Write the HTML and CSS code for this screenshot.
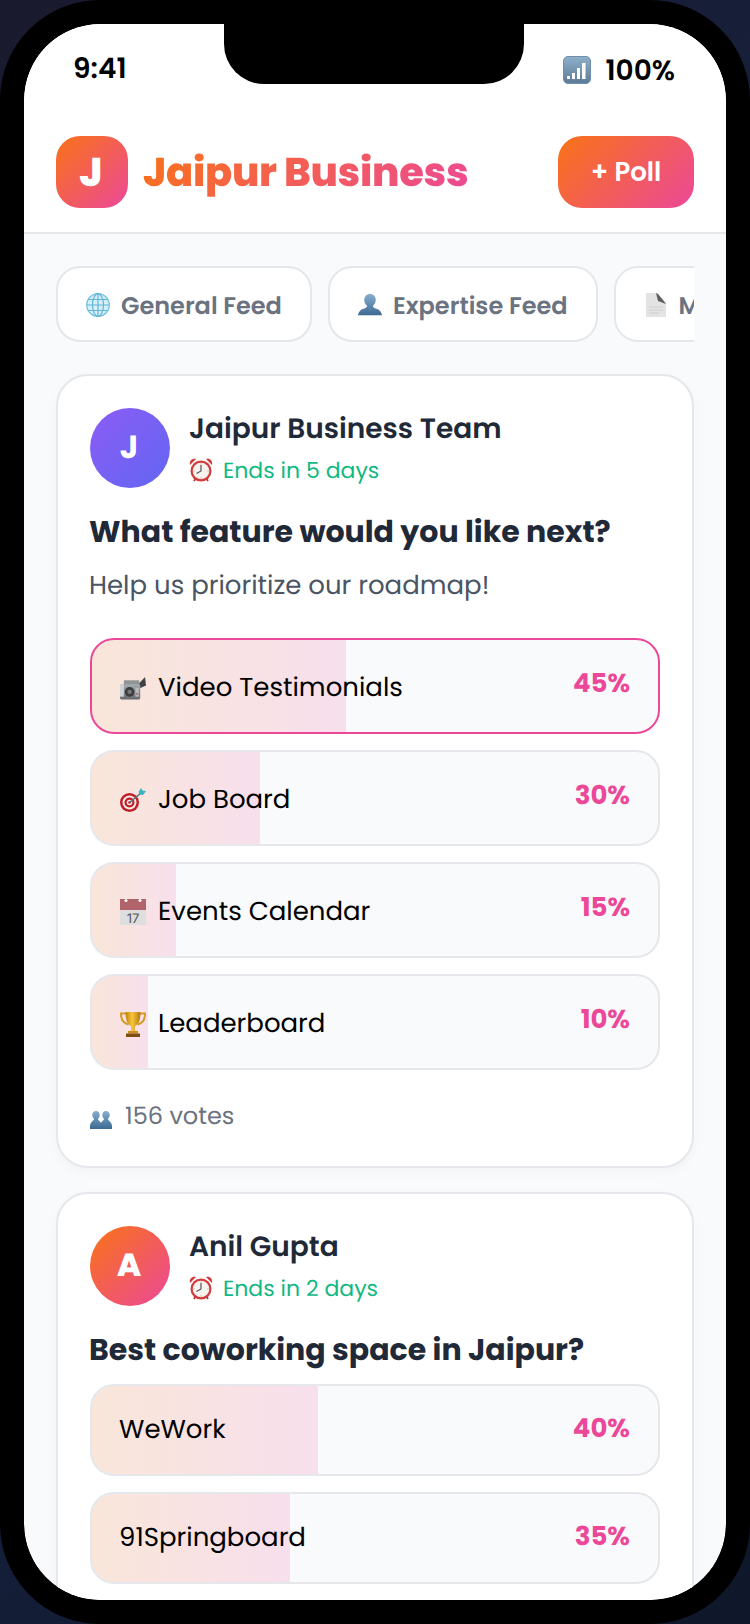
FILE: index.html
```html
<!DOCTYPE html>
<html lang="en">
<head>
<meta charset="utf-8">
<title>Jaipur Business</title>
<link rel="stylesheet" href="styles.css">
</head>
<body>
<svg class="defs" width="0" height="0" aria-hidden="true">
  <defs>
    <linearGradient id="sig" x1="0" y1="0" x2="0" y2="1"><stop offset="0" stop-color="#8fb0cb"/><stop offset="1" stop-color="#5b7a97"/></linearGradient>
    <linearGradient id="blue" x1="0" y1="0" x2="0" y2="1"><stop offset="0" stop-color="#86aed0"/><stop offset="1" stop-color="#3d6a92"/></linearGradient>
    <linearGradient id="gold" x1="0" y1="0" x2="1" y2="0"><stop offset="0" stop-color="#c4820c"/><stop offset=".45" stop-color="#f7c63e"/><stop offset="1" stop-color="#b5760a"/></linearGradient>
    <linearGradient id="cam" x1="0" y1="0" x2="0" y2="1"><stop offset="0" stop-color="#a7adb0"/><stop offset="1" stop-color="#63686b"/></linearGradient>
    <symbol id="clock" viewBox="0 0 24 24">
      <path d="M1 7C0 3 3 0 7 1zM23 7c1-4-2-7-6-6z" fill="#d43c3c"/>
      <path d="M5 23l2-3M19 23l-2-3" stroke="#a33" stroke-width="1.800"/>
      <circle cx="12" cy="13" r="10.500" fill="#d43c3c"/>
      <circle cx="12" cy="13" r="8.300" fill="#f7f3ef"/>
      <path d="M12 7v6l-4.500 2.500" fill="none" stroke="#555" stroke-width="1.200"/>
      <path d="M12 5.500v1M12 19.500v1M4.500 13h1M18.500 13h1" stroke="#999" stroke-width="1"/>
    </symbol>
  </defs>
</svg>
<main class="phone">
  <div class="screen">
    <div class="notch"></div>
    <div class="status">
      <span class="time">9:41</span>
      <span class="status-right">
        <svg class="sig-icon" viewBox="0 0 28 28"><rect x=".5" y=".5" width="27" height="27" rx="4.500" fill="url(#sig)" stroke="#6f8fab"/><g fill="#fff"><rect x="4" y="20" width="3" height="3"/><rect x="9" y="17" width="3" height="6"/><rect x="14" y="12" width="3" height="11"/><rect x="19" y="7" width="3.500" height="16"/></g></svg>
        <span>100%</span>
      </span>
    </div>
    <header class="header">
      <div class="brand">
        <div class="logo">J</div>
        <h1 class="brand-name">Jaipur Business</h1>
      </div>
      <button class="add-poll">+ Poll</button>
    </header>
    <div class="content">
      <nav class="tabs">
        <a class="tab">
          <svg class="tab-icon" viewBox="0 0 24 24"><circle cx="12" cy="12" r="11.300" fill="#d6eef7" stroke="#74c3e0" stroke-width="1.300"/><g fill="none" stroke="#62b6d8" stroke-width="1.200"><ellipse cx="12" cy="12" rx="5.500" ry="11.300"/><path d="M12 .7v22.600M.7 12h22.600M2.500 6.500h19M2.500 17.500h19"/></g></svg>
          General Feed
        </a>
        <a class="tab">
          <svg class="tab-icon tab-icon-wide" viewBox="0 0 26 24"><path d="M13 0c4 0 6.200 2.900 6.200 6.600 0 2.800-1.300 5-3 6.300 0 1.400.7 2.100 2.200 2.600 3.400 1.100 6.600 2.300 7.600 7.500H0c1-5.200 4.200-6.400 7.600-7.500 1.500-.5 2.200-1.200 2.200-2.600-1.700-1.300-3-3.500-3-6.300C6.800 2.900 9 0 13 0z" fill="url(#blue)"/></svg>
          Expertise Feed
        </a>
        <a class="tab">
          <svg class="tab-icon" viewBox="0 0 24 24"><path d="M2 0h11l9 10v14H2z" fill="#e3e3e3"/><path d="M12 0l2 8 8 3-3-4-5-6z" fill="#5e5e5e"/><path d="M5 14h14M5 17h14M5 20h10" stroke="#cfcfcf" stroke-width="1"/></svg>
          My Feed
        </a>
      </nav>

      <article class="card">
        <div class="card-head">
          <div class="avatar avatar-violet">J</div>
          <div class="meta">
            <div class="author">Jaipur Business Team</div>
            <div class="ends">
              <svg class="clock"><use href="#clock"/></svg>
              <span>Ends in 5 days</span>
            </div>
          </div>
        </div>
        <h2 class="question">What feature would you like next?</h2>
        <p class="desc">Help us prioritize our roadmap!</p>
        <div class="options">
          <div class="option option-active">
            <div class="fill" style="width:44.9%"></div>
            <div class="label">
              <svg class="opt-icon" viewBox="0 0 27 24"><path d="M19 8l7-7.500 1 9-7 3z" fill="#3f4244"/><rect x="4" y="4" width="16" height="5" fill="#8f9496"/><rect x="0" y="8" width="21" height="16" rx="1.500" fill="url(#cam)"/><rect x="0" y="8" width="4" height="13" fill="#cfd3d5"/><circle cx="10" cy="16" r="5" fill="#3a3c3e"/><circle cx="10" cy="16" r="2.300" fill="#75797c"/><rect x="16" y="12" width="3.500" height="9" fill="#b7bbbd"/><circle cx="17.700" cy="18" r=".9" fill="#b33"/></svg>
              <span>Video Testimonials</span>
            </div>
            <span class="pct">45%</span>
          </div>
          <div class="option">
            <div class="fill" style="width:29.7%"></div>
            <div class="label">
              <svg class="opt-icon" viewBox="0 0 26 24"><circle cx="9.500" cy="14.500" r="9.500" fill="#c11d28"/><circle cx="9.500" cy="14.500" r="7" fill="#f6ebe8"/><circle cx="9.500" cy="14.500" r="5" fill="#c11d28"/><circle cx="9.500" cy="14.500" r="2.800" fill="#f6ebe8"/><circle cx="9.500" cy="14.500" r="1.300" fill="#c11d28"/><path d="M9.500 14.500L21 5" stroke="#5d6f75" stroke-width="1.500"/><path d="M18.500 4L21 0l1.500 2.500L26 3l-3 4-3-.5z" fill="#38b4c6"/></svg>
              <span>Job Board</span>
            </div>
            <span class="pct">30%</span>
          </div>
          <div class="option">
            <div class="fill" style="width:14.85%"></div>
            <div class="label">
              <svg class="opt-icon" viewBox="0 0 26 26"><rect width="26" height="11" fill="#b0636a"/><rect y="11" width="26" height="15" fill="#dedede"/><circle cx="6" cy="1.500" r="1.500" fill="#fff"/><circle cx="20" cy="1.500" r="1.500" fill="#fff"/><text x="13" y="23.500" text-anchor="middle" class="cal-num">17</text></svg>
              <span>Events Calendar</span>
            </div>
            <span class="pct">15%</span>
          </div>
          <div class="option">
            <div class="fill" style="width:9.9%"></div>
            <div class="label">
              <svg class="opt-icon" viewBox="0 0 26 26"><path d="M6 2.500H1c0 6 2.500 10 7.500 11M20 2.500h5c0 6-2.500 10-7.500 11" fill="none" stroke="#d59a22" stroke-width="2"/><path d="M5.500 1h15c0 8.500-2 12.500-5.500 14v5h-4v-5C7.500 13.500 5.500 9.500 5.500 1z" fill="url(#gold)"/><rect x="8" y="20" width="10" height="2.500" fill="#c98e1c"/><rect x="6" y="22.500" width="14" height="3.500" fill="#7d4e10"/></svg>
              <span>Leaderboard</span>
            </div>
            <span class="pct">10%</span>
          </div>
        </div>
        <div class="votes">
          <svg class="votes-icon" viewBox="0 0 22 18"><path d="M6 0c2.300 0 3.700 1.800 3.700 4.100 0 1.700-.8 3.100-1.800 4 0 1.700 3.300 2 4.100 6.400V18H0v-3.500C.8 10.100 4.100 9.800 4.100 8.100c-1-.9-1.800-2.300-1.800-4C2.300 1.800 3.700 0 6 0z" fill="url(#blue)"/><path d="M16 0c2.300 0 3.700 1.800 3.700 4.100 0 1.700-.8 3.100-1.800 4 0 1.700 3.300 2 4.100 6.400V18H10v-3.500c.8-4.400 4.100-4.700 4.100-6.400-1-.9-1.800-2.300-1.800-4C12.300 1.800 13.700 0 16 0z" fill="url(#blue)"/></svg>
          <span>156 votes</span>
        </div>
      </article>

      <article class="card">
        <div class="card-head">
          <div class="avatar avatar-orange">A</div>
          <div class="meta">
            <div class="author">Anil Gupta</div>
            <div class="ends">
              <svg class="clock"><use href="#clock"/></svg>
              <span>Ends in 2 days</span>
            </div>
          </div>
        </div>
        <h2 class="question question-tight">Best coworking space in Jaipur?</h2>
        <div class="options">
          <div class="option option-plain">
            <div class="fill" style="width:40%"></div>
            <div class="label"><span>WeWork</span></div>
            <span class="pct">40%</span>
          </div>
          <div class="option option-plain">
            <div class="fill" style="width:35%"></div>
            <div class="label"><span>91Springboard</span></div>
            <span class="pct">35%</span>
          </div>
        </div>
      </article>
    </div>
  </div>
</main>
</body>
</html>
```

FILE: styles.css
```css
* { box-sizing: border-box; }
html, body { margin: 0; padding: 0; }
body {
  width: 750px;
  height: 1624px;
  overflow: hidden;
  background: linear-gradient(135deg, #1a1a2e, #16213e 50%, #0f172a);
  font-family: "Poppins", "Inter", "Liberation Sans", sans-serif;
  text-rendering: geometricPrecision;
}
.defs { display: block; height: 0; }
.phone {
  width: 750px;
  height: 1624px;
  border: 24px solid #000;
  border-radius: 100px;
  background: #000;
  overflow: hidden;
}
.screen {
  position: relative;
  height: 100%;
  display: flex;
  flex-direction: column;
  background: #f9fafb;
  border-radius: 76px;
  overflow: hidden;
}
.notch {
  position: absolute;
  top: 0;
  left: 200px;
  width: 300px;
  height: 60px;
  background: #000;
  border-radius: 0 0 40px 40px;
}
.status {
  display: flex;
  justify-content: space-between;
  align-items: center;
  height: 88px;
  padding: 0 51px 0 49px;
  background: #fff;
  color: #000;
  font-size: 28px;
  font-weight: 600;
}
.time { margin-top: 2px; }
.status-right { display: flex; align-items: center; gap: 14px; margin-top: 6px; }
.sig-icon { width: 28px; height: 28px; margin-top: -2px; }
.header {
  display: flex;
  justify-content: space-between;
  align-items: center;
  height: 122px;
  padding: 24px 32px 24px;
  background: #fff;
  border-bottom: 2px solid #e5e7eb;
}
.brand { display: flex; align-items: center; gap: 15px; }
.logo {
  width: 72px;
  height: 72px;
  display: flex;
  align-items: center;
  justify-content: center;
  padding-right: 2px;
  border-radius: 24px;
  background: linear-gradient(135deg, #f97316, #ec4899);
  color: #fff;
  font-size: 40px;
  font-weight: 800;
}
.brand-name {
  margin: 0;
  font-size: 40px;
  font-weight: 800;
  letter-spacing: -0.3px;
  background: linear-gradient(135deg, #f97316, #ec4899);
  -webkit-background-clip: text;
  background-clip: text;
  color: transparent;
}
.add-poll {
  width: 136px;
  height: 72px;
  padding: 0;
  border: 0;
  border-radius: 24px;
  background: linear-gradient(135deg, #f97316, #ec4899);
  color: #fff;
  font-family: inherit;
  font-size: 26px;
  font-weight: 600;
}
.content {
  flex: 1;
  min-height: 0;
  overflow: hidden;
  padding: 32px;
  display: flex;
  flex-direction: column;
  gap: 24px;
}
.tabs { display: flex; gap: 16px; overflow: hidden; flex: none; margin-bottom: 8px; }
.tab {
  flex: none;
  display: flex;
  align-items: center;
  gap: 11px;
  height: 76px;
  padding: 4px 28px 0;
  background: #fff;
  border: 2px solid #e5e7eb;
  border-radius: 24px;
  color: #6b7280;
  font-size: 24px;
  font-weight: 600;
  white-space: nowrap;
}
.tab-icon { width: 24px; height: 24px; flex: none; margin-top: -3px; }
.tab-icon-wide { overflow: visible; }
.card {
  flex: none;
  padding: 32px;
  background: #fff;
  border: 2px solid #e5e7eb;
  border-radius: 32px;
  box-shadow: 0 4px 12px rgba(0, 0, 0, 0.03);
}
.card-head { display: flex; align-items: center; gap: 19px; margin-bottom: 21px; }
.avatar {
  width: 80px;
  height: 80px;
  flex: none;
  display: flex;
  align-items: center;
  justify-content: center;
  padding-right: 2px;
  border-radius: 50%;
  color: #fff;
  font-size: 32px;
  font-weight: 700;
}
.avatar-violet { background: linear-gradient(135deg, #8b5cf6, #6366f1); }
.avatar-orange { background: linear-gradient(135deg, #f97316, #ec4899); font-weight: 800; }
.meta { display: flex; flex-direction: column; gap: 4px; margin-top: -2px; }
.author { color: #1f2937; font-size: 28px; font-weight: 600; }
.ends { display: flex; align-items: center; gap: 10px; color: #10b981; font-size: 22px; }
.clock { width: 24px; height: 24px; flex: none; }
.question { margin: 0 0 12px -1px; color: #1f2937; font-size: 30px; font-weight: 700; }
.question-tight { margin-bottom: 11px; }
.desc { margin: 0 0 32px -1px; color: #4b5563; font-size: 26px; }
.options { display: flex; flex-direction: column; gap: 16px; }
.option {
  position: relative;
  display: flex;
  justify-content: space-between;
  align-items: center;
  height: 96px;
  padding: 0 28px;
  background: #f9fafb;
  border: 2px solid #e5e7eb;
  border-radius: 24px;
  overflow: hidden;
}
.option-active { border-color: #ec4899; }
.option-plain { height: 92px; }
.fill {
  position: absolute;
  top: 0;
  bottom: 0;
  left: 0;
  background: linear-gradient(90deg, rgba(249, 115, 22, 0.15), rgba(236, 72, 153, 0.15));
}
.label { position: relative; display: flex; align-items: center; gap: 12px; color: #000; font-size: 26px; margin-top: 4px; }
.option-plain .label { margin: 0 0 0 -1px; }
.opt-icon { width: 26px; height: 26px; flex: none; }
.cal-num { font-size: 13px; fill: #555; font-family: "Inter", sans-serif; }
.pct { position: relative; color: #ec4899; font-size: 26px; font-weight: 700; margin-top: -4px; }
.option-plain .pct { margin-top: -2px; }
.votes { display: flex; align-items: center; gap: 13px; margin-top: 29px; color: #6b7280; font-size: 24px; }
.votes-icon { width: 22px; height: 18px; flex: none; margin-top: 6px; }
```
